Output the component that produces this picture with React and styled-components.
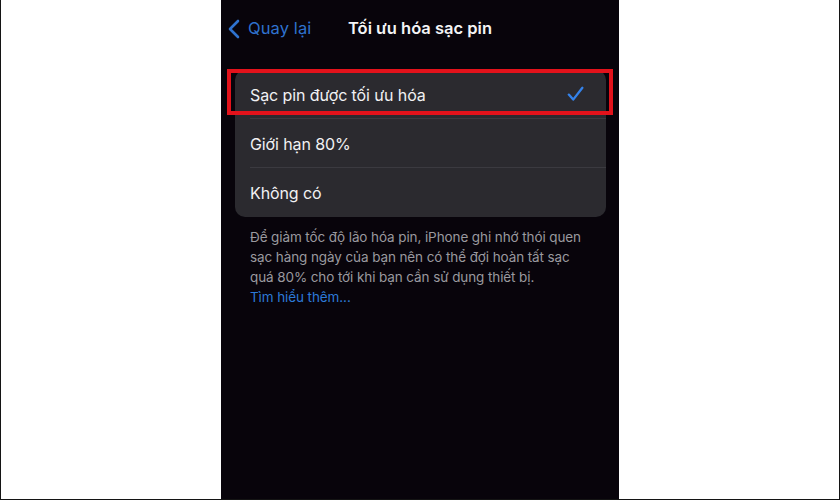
import React from 'react';
import styled, { createGlobalStyle } from 'styled-components';

const GlobalStyle = createGlobalStyle`
  html, body {
    margin: 0;
    padding: 0;
    background: #ffffff;
  }
  * {
    box-sizing: border-box;
  }
`;

const options = [
  { id: 'optimized', label: 'Sạc pin được tối ưu hóa', selected: true },
  { id: 'limit', label: 'Giới hạn 80%' },
  { id: 'none', label: 'Không có' },
];

const Chevron = () => (
  <svg width="12" height="20" viewBox="0 0 12 20">
    <path d="M10 2 L2 10 L10 18" fill="none" stroke="#2f72cf" strokeWidth="2.6" strokeLinecap="round" strokeLinejoin="round" />
  </svg>
);

const Check = () => (
  <svg width="17" height="16" viewBox="0 0 17 16">
    <path d="M1.8 8.6 L6.2 13.6 L15.4 1.8" fill="none" stroke="#3482ea" strokeWidth="2.3" strokeLinecap="round" strokeLinejoin="round" />
  </svg>
);

const App = () => {
  return (
    <>
      <GlobalStyle />
      <Frame>
        <Screen>
          <NavBar>
            <BackLink>
              <Chevron />
              <span>Quay lại</span>
            </BackLink>
            <Title>Tối ưu hóa sạc pin</Title>
            <div />
          </NavBar>
          <Card>
            {options.map((opt, index) => (
              <Row key={opt.id} selected={opt.selected} last={index === options.length - 1}>
                <RowLabel>{opt.label}</RowLabel>
                {opt.selected && <Check />}
              </Row>
            ))}
          </Card>
          <Footer>
            Để giảm tốc độ lão hóa pin, iPhone ghi nhớ thói quen sạc hàng ngày của bạn nên có thể đợi hoàn tất sạc
            quá 80% cho tới khi bạn cần sử dụng thiết bị.
            <LearnMore>Tìm hiểu thêm...</LearnMore>
          </Footer>
        </Screen>
      </Frame>
    </>
  );
};

export default App;

const Frame = styled.div`
  width: 840px;
  height: 500px;
  display: flex;
  justify-content: center;
  background: #ffffff;
  border: 1px solid #141414;
  border-top: none;
`;

const Screen = styled.div`
  width: 398px;
  height: 100%;
  background: #08040b;
  font-family: 'Inter', 'Liberation Sans', sans-serif;
  display: flex;
  flex-direction: column;
`;

const NavBar = styled.div`
  height: 56px;
  display: grid;
  grid-template-columns: 1fr auto 1fr;
  align-items: center;
  padding: 0 7px;
`;

const BackLink = styled.div`
  display: flex;
  align-items: center;
  gap: 8px;
  color: #2f72cf;
  font-size: 16.5px;
  letter-spacing: 0.1px;
  svg {
    margin-top: 1px;
  }
`;

const Title = styled.div`
  color: #f4f4f6;
  font-size: 16.5px;
  font-weight: 600;
`;

const Card = styled.div`
  margin: 14px 13px 0 14px;
  background: #2b2a2f;
  border-radius: 10px;
`;

const Row = styled.div`
  position: relative;
  height: 49px;
  display: flex;
  align-items: center;
  justify-content: space-between;
  padding: 0 22px 0 15px;
  &::after {
    content: '';
    position: absolute;
    left: 15px;
    right: 0;
    bottom: 0;
    height: 1px;
    background: #3b3a40;
    display: ${(props) => (props.last ? 'none' : 'block')};
  }
  &::before {
    content: '';
    position: absolute;
    top: -1px;
    bottom: 4px;
    left: -8px;
    right: -7px;
    border: 4px solid #e3121b;
    display: ${(props) => (props.selected ? 'block' : 'none')};
    z-index: 1;
  }
  svg {
    margin-top: -1px;
  }
`;

const RowLabel = styled.span`
  color: #f1f1f3;
  font-size: 16px;
  letter-spacing: -0.1px;
`;

const Footer = styled.div`
  padding: 10px 26px 0 29px;
  color: #9a999f;
  font-size: 13.5px;
  line-height: 20px;
  letter-spacing: -0.1px;
`;

const LearnMore = styled.div`
  color: #2c79d6;
`;
